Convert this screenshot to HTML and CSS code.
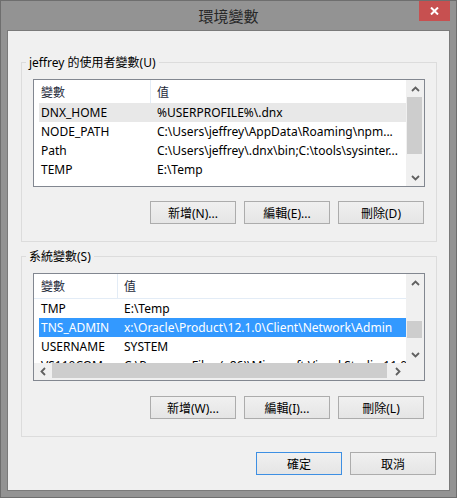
FILE: index.html
```html
<!DOCTYPE html>
<html lang="zh-Hant">
<head>
<meta charset="utf-8">
<title>環境變數</title>
<link rel="stylesheet" href="styles.css">
</head>
<body>
<div class="window">
  <div class="titlebar">
    <span class="title">環境變數</span>
    <button class="close" aria-label="close">
      <svg width="9" height="8" viewBox="0 0 9 8"><path d="M1 0.5 L8 7.5 M8 0.5 L1 7.5" stroke="#fff" stroke-width="2" fill="none"/></svg>
    </button>
  </div>
  <div class="client">
    <fieldset class="group">
      <legend>jeffrey 的使用者變數(U)</legend>
      <div class="listview lv-user">
        <div class="lv-main">
          <div class="lv-head"><span class="h1">變數</span><span class="h2">值</span></div>
          <div class="row hover"><span class="c1">DNX_HOME</span><span class="c2">%USERPROFILE%\.dnx</span></div>
          <div class="row"><span class="c1">NODE_PATH</span><span class="c2">C:\Users\jeffrey\AppData\Roaming\npm...</span></div>
          <div class="row"><span class="c1">Path</span><span class="c2">C:\Users\jeffrey\.dnx\bin;C:\tools\sysinter...</span></div>
          <div class="row"><span class="c1">TEMP</span><span class="c2">E:\Temp</span></div>
        </div>
        <div class="vscroll">
          <div class="arrow"><svg width="9" height="6" viewBox="0 0 9 6"><path d="M1 5 L4.5 1.5 L8 5" stroke="#606060" stroke-width="1.8" fill="none"/></svg></div>
          <div class="track"><div class="thumb" style="margin-top:0;height:57px"></div></div>
          <div class="arrow"><svg width="9" height="6" viewBox="0 0 9 6"><path d="M1 1 L4.5 4.5 L8 1" stroke="#606060" stroke-width="1.8" fill="none"/></svg></div>
        </div>
      </div>
      <div class="btnrow">
        <button class="btn">新增(N)...</button>
        <button class="btn">編輯(E)...</button>
        <button class="btn">刪除(D)</button>
      </div>
    </fieldset>

    <fieldset class="group">
      <legend>系統變數(S)</legend>
      <div class="listview lv-sys">
        <div class="lv-main">
          <div class="lv-head"><span class="h1">變數</span><span class="h2">值</span></div>
          <div class="row"><span class="c1">TMP</span><span class="c2">E:\Temp</span></div>
          <div class="row selected"><span class="c1">TNS_ADMIN</span><span class="c2">x:\Oracle\Product\12.1.0\Client\Network\Admin</span></div>
          <div class="row"><span class="c1">USERNAME</span><span class="c2">SYSTEM</span></div>
          <div class="row"><span class="c1">VS110COMNTOOLS</span><span class="c2">C:\Program Files (x86)\Microsoft Visual Studio 11.0\Common7\Tools\</span></div>
        </div>
        <div class="vscroll">
          <div class="arrow"><svg width="9" height="6" viewBox="0 0 9 6"><path d="M1 5 L4.5 1.5 L8 5" stroke="#606060" stroke-width="1.8" fill="none"/></svg></div>
          <div class="track"><div class="thumb" style="margin-top:30px;height:17px"></div></div>
          <div class="arrow"><svg width="9" height="6" viewBox="0 0 9 6"><path d="M1 1 L4.5 4.5 L8 1" stroke="#606060" stroke-width="1.8" fill="none"/></svg></div>
        </div>
        <div class="hscroll">
          <div class="arrow harrow"><svg width="6" height="9" viewBox="0 0 6 9"><path d="M5 1 L1.5 4.5 L5 8" stroke="#606060" stroke-width="1.8" fill="none"/></svg></div>
          <div class="htrack"><div class="hthumb" style="width:335px"></div></div>
          <div class="arrow harrow"><svg width="6" height="9" viewBox="0 0 6 9"><path d="M1 1 L4.5 4.5 L1 8" stroke="#606060" stroke-width="1.8" fill="none"/></svg></div>
        </div>
        <div class="corner"></div>
      </div>
      <div class="btnrow btnrow-sys">
        <button class="btn">新增(W)...</button>
        <button class="btn">編輯(I)...</button>
        <button class="btn">刪除(L)</button>
      </div>
    </fieldset>

    <div class="dlg-buttons">
      <button class="btn default">確定</button>
      <button class="btn">取消</button>
    </div>
  </div>
</div>
</body>
</html>
```

FILE: styles.css
```css
* { box-sizing: border-box; }
html, body { margin: 0; padding: 0; }
body {
  width: 457px;
  height: 498px;
  overflow: hidden;
  background: #939393;
  font-family: "Noto Sans", "Noto Sans CJK TC", sans-serif;
  font-size: 12px;
  color: #000;
}
.window {
  width: 457px;
  height: 498px;
  border: 1px solid #6e6e6e;
  background: #939393;
  display: flex;
  flex-direction: column;
}
.titlebar {
  height: 29px;
  flex: none;
  display: grid;
  grid-template-columns: 1fr auto 1fr;
}
.title {
  grid-column: 2;
  align-self: center;
  font-family: "Noto Sans CJK TC", sans-serif;
  font-size: 15px;
  line-height: 29px;
  color: #262626;
}
.close {
  grid-column: 3;
  justify-self: end;
  align-self: start;
  width: 31px;
  height: 20px;
  margin-right: 6px;
  padding: 0;
  border: 0;
  background: #c75050;
  display: flex;
  align-items: center;
  justify-content: center;
}
.close svg { display: block; }
.client {
  margin: 0 6px;
  height: 461px;
  flex: none;
  border: 1px solid #7a7a7a;
  background: #f0f0f0;
  padding: 24px 12px 15px 13px;
  display: flex;
  flex-direction: column;
}
.group {
  margin: 0;
  min-width: 0;
  border: 1px solid #dcdcdc;
  padding: 9px 11px 17px 11px;
}
.group + .group { margin-top: 7px; }
.group legend {
  margin-left: -7px;
  padding: 0 3px;
  height: 15px;
  line-height: 15px;
  font-size: 12px;
}
.listview {
  height: 108px;
  border: 1px solid #828790;
  background: #fff;
  display: grid;
  grid-template-columns: 1fr 18px;
  grid-template-rows: 1fr;
  overflow: hidden;
  --c1: 111px;
}
.lv-sys {
  grid-template-rows: 1fr 17px;
  --c1: 78px;
}
.lv-main {
  min-width: 0;
  min-height: 0;
  overflow: hidden;
  display: flex;
  flex-direction: column;
}
.lv-head {
  flex: none;
  height: 23px;
  display: flex;
  align-items: stretch;
  padding-left: 5px;
  white-space: nowrap;
}
.lv-sys .lv-head {
  height: 25px;
  border-bottom: 1px solid #e3ecf6;
}
.h1 {
  width: calc(var(--c1) + 1px);
  padding-left: 2px;
  border-right: 1px solid #e3ecf6;
  display: flex;
  align-items: center;
  color: #1e2a3a;
}
.h2 {
  padding-left: 6px;
  display: flex;
  align-items: center;
  color: #1e2a3a;
}
.row {
  flex: none;
  height: 19px;
  line-height: 19px;
  margin-left: 5px;
  display: flex;
  white-space: nowrap;
}
.row.hover { background: #e8e8e8; }
.row.selected { background: #3399ff; color: #fff; }
.c1 {
  width: var(--c1);
  flex: none;
  padding-left: 2px;
  overflow: hidden;
  text-overflow: ellipsis;
}
.c2 {
  padding-left: 7px;
  overflow: hidden;
}
.vscroll {
  background: #f0f0f0;
  display: flex;
  flex-direction: column;
  min-height: 0;
}
.arrow {
  flex: none;
  height: 17px;
  display: flex;
  align-items: center;
  justify-content: center;
}
.arrow svg { display: block; }
.track { flex: 1; min-height: 0; }
.thumb { background: #cdcdcd; margin-left: 1px; margin-right: 2px; }
.hscroll {
  grid-column: 1;
  grid-row: 2;
  background: #f0f0f0;
  display: flex;
}
.harrow { width: 17px; height: 17px; }
.htrack { flex: 1; }
.hthumb { height: 15px; margin-top: 0; margin-left: 1px; background: #cdcdcd; }
.corner { grid-column: 2; grid-row: 2; background: #f0f0f0; }
.btnrow {
  display: flex;
  justify-content: flex-end;
  gap: 8px;
  margin-top: 14px;
  padding-right: 1px;
}
.btnrow-sys { margin-top: 15px; }
.btn {
  width: 86px;
  height: 23px;
  padding: 0;
  border: 1px solid #acacac;
  background: linear-gradient(#f0f0f0, #e5e5e5);
  font-family: "Noto Sans", "Noto Sans CJK TC", sans-serif;
  font-size: 12px;
  color: #000;
}
.btn.default { border-color: #3d8fe3; }
.dlg-buttons {
  display: flex;
  justify-content: flex-end;
  gap: 8px;
  margin-top: 15px;
  padding-right: 1px;
}
```
